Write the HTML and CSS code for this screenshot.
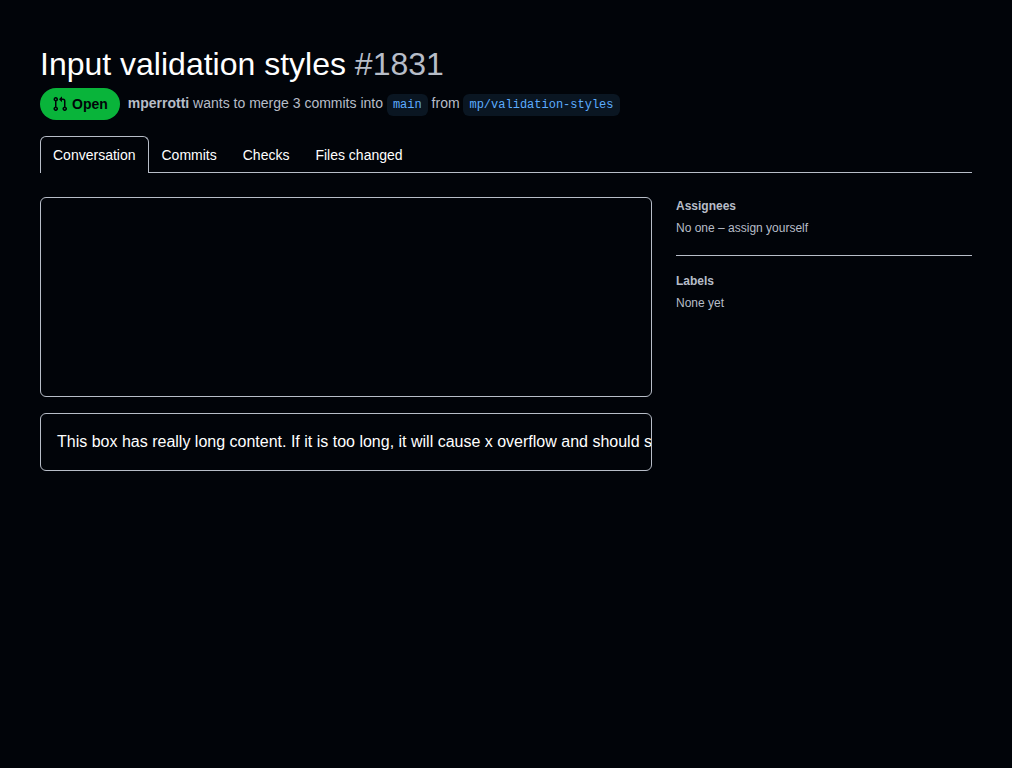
FILE: index.html
```html
<!DOCTYPE html>
<html lang="en">
<head>
<meta charset="utf-8">
<meta name="viewport" content="width=device-width, initial-scale=1">
<title>Input validation styles #1831</title>
<link rel="stylesheet" href="styles.css">
</head>
<body>
<div class="page">
  <header class="header">
    <h1 class="title">Input validation styles <span class="number">#1831</span></h1>
    <div class="meta">
      <span class="state"><svg class="state-icon" viewBox="0 0 16 16" width="16" height="16" aria-hidden="true"><path d="M7.177 3.073 9.573.677A.25.25 0 0 1 10 .854v4.792a.25.25 0 0 1-.427.177L7.177 3.427a.25.25 0 0 1 0-.354ZM3.75 2.5a.75.75 0 1 0 0 1.5.75.75 0 0 0 0-1.5Zm-2.25.75a2.25 2.25 0 1 1 3 2.122v5.256a2.251 2.251 0 1 1-1.5 0V5.372A2.25 2.25 0 0 1 1.5 3.25ZM11 2.5h-1V4h1a1 1 0 0 1 1 1v5.628a2.251 2.251 0 1 0 1.5 0V5A2.5 2.5 0 0 0 11 2.5Zm1 10.25a.75.75 0 1 1 1.5 0 .75.75 0 0 1-1.5 0ZM3.75 12a.75.75 0 1 0 0 1.5.75.75 0 0 0 0-1.5Z"/></svg>Open</span>
      <p class="summary"><a class="author" href="#">mperrotti</a> wants to merge 3 commits into <a class="branch" href="#">main</a> from <a class="branch" href="#">mp/validation-styles</a></p>
    </div>
  </header>
  <nav class="tabs" aria-label="Pull request">
    <a class="tab tab-selected" href="#" aria-current="page">Conversation</a>
    <a class="tab" href="#">Commits</a>
    <a class="tab" href="#">Checks</a>
    <a class="tab" href="#">Files changed</a>
  </nav>
  <div class="layout">
    <main class="content">
      <div class="box box-empty"></div>
      <div class="box box-long">This box has really long content. If it is too long, it will cause x overflow and should show a scrollbar.</div>
    </main>
    <aside class="sidebar">
      <section class="group">
        <h2 class="group-title">Assignees</h2>
        <p class="group-text">No one – <a class="assign" href="#">assign yourself</a></p>
      </section>
      <section class="group">
        <h2 class="group-title">Labels</h2>
        <p class="group-text">None yet</p>
      </section>
    </aside>
  </div>
</div>
</body>
</html>
```
FILE: styles.css
```css
* { box-sizing: border-box; }
body {
  margin: 0;
  background: #010409;
  color: #ffffff;
  font: 16px/24px "Liberation Sans", Arial, sans-serif;
}
h1, h2, p { margin: 0; }
a { color: inherit; text-decoration: none; }
.page { padding: 40px; }
.title { font-size: 32px; line-height: 48px; font-weight: 400; }
.number { color: #b7bdc8; }
.meta { display: flex; align-items: center; gap: 8px; }
.state {
  display: inline-flex;
  align-items: center;
  gap: 4px;
  padding: 6px 12px;
  border-radius: 32px;
  background: #09b43a;
  color: #010409;
  font-size: 14px;
  line-height: 20px;
  font-weight: 700;
}
.state-icon { fill: currentColor; }
.summary { color: #b7bdc8; font-size: 14px; line-height: 21px; }
.author { font-weight: 700; }
.branch {
  display: inline-block;
  padding: 2px 6px;
  border-radius: 6px;
  background: #0a1622;
  color: #5cacff;
  font: 12px/18px "Liberation Mono", monospace;
}
.tabs {
  display: flex;
  margin-top: 16px;
  border-bottom: 1px solid #b7bdc8;
}
.tab {
  margin-bottom: -1px;
  padding: 8px 12px;
  border: 1px solid transparent;
  border-bottom: 0;
  font-size: 14px;
  line-height: 20px;
}
.tab-selected {
  border-color: #b7bdc8;
  border-radius: 6px 6px 0 0;
  background: #010409;
}
.layout {
  display: grid;
  grid-template-columns: minmax(0, 1fr) 296px;
  gap: 24px;
  margin-top: 24px;
}
.content { display: grid; gap: 16px; align-content: start; }
.box { min-width: 0; border: 1px solid #b7bdc8; border-radius: 6px; }
.box-empty { height: 200px; }
.box-long { padding: 16px; overflow: auto hidden; white-space: nowrap; scrollbar-width: none; }
.group { padding-bottom: 18px; }
.group + .group { padding-top: 16px; border-top: 1px solid #b7bdc8; }
.group-title, .group-text { color: #b7bdc8; font-size: 12px; line-height: 18px; }
.group-title { margin-bottom: 4px; }
```
